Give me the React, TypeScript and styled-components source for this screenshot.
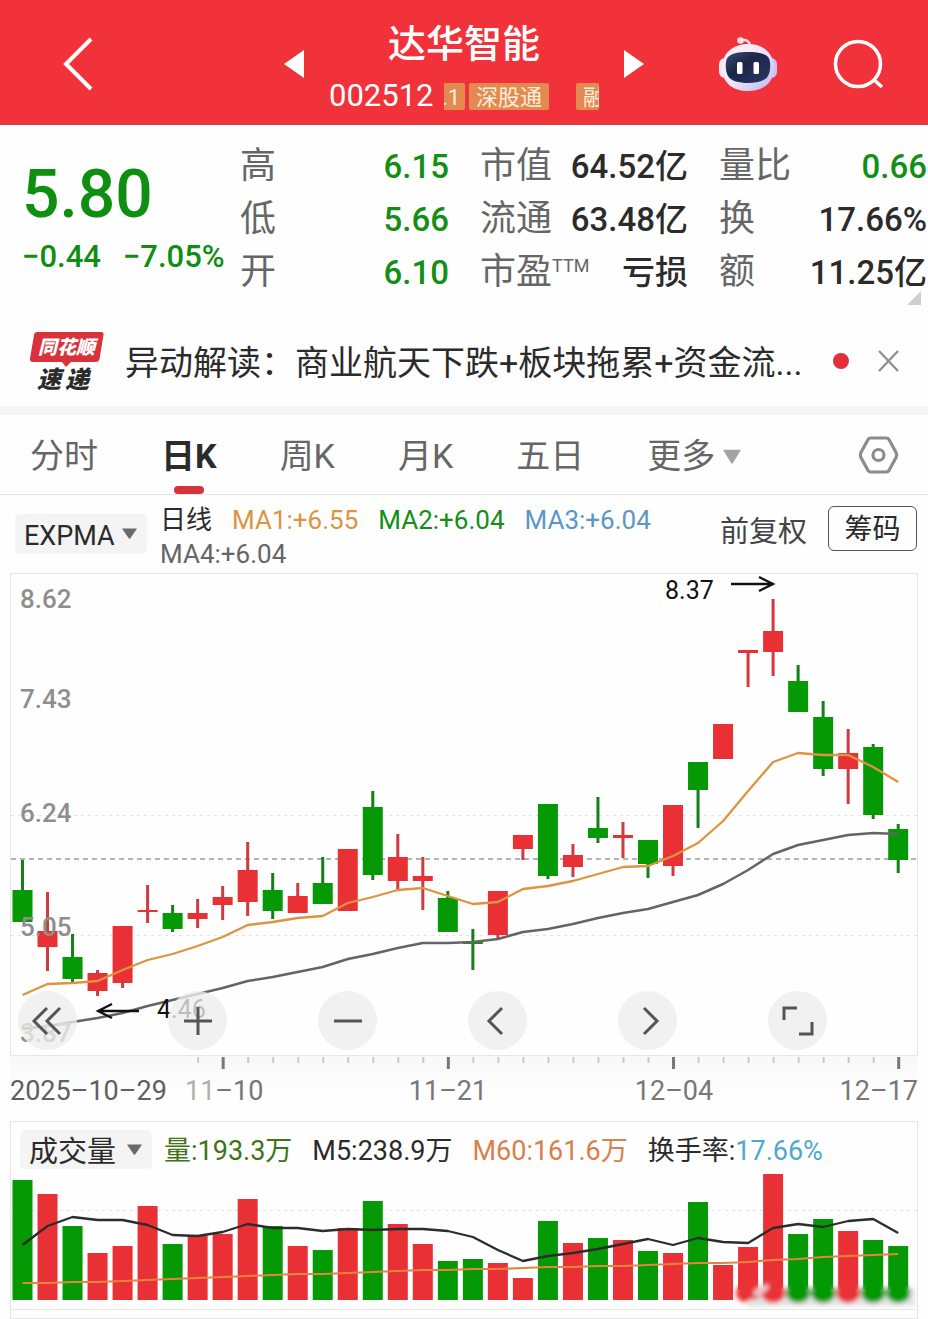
import React from "react";
import styled, { createGlobalStyle } from "styled-components";

const RED = "#e93135";
const GREEN = "#059905";

const GlobalStyle = createGlobalStyle`
  *, *::before, *::after { box-sizing: border-box; }
  body {
    margin: 0;
    background: #fefefe;
    color: #2b2b2b;
    font-family: Roboto, "Noto Sans CJK SC", sans-serif;
  }
  button, select { font: inherit; color: inherit; margin: 0; padding: 0; border: 0; background: none; }
  h1, p, dl, dt, dd { margin: 0; font-weight: inherit; }
  svg { display: block; }
`;

/* ---------- header ---------- */

const Header = styled.header`
  display: grid;
  grid-template-columns: 1fr auto 1fr;
  align-items: center;
  height: 125px;
  padding: 4px 42px 0 60px;
  background: #f2323a;
  border-bottom: 1px solid #c8434b;
  color: #fff;
`;

const IconButton = styled.button`
  display: block;
  flex: none;
`;

const StockSwitcher = styled.div`
  display: flex;
  align-items: center;
  gap: 25px;
  margin-right: 18px;
`;

const StockInfo = styled.div`
  width: 270px;
  padding-top: 10px;
`;

const StockName = styled.h1`
  font-size: 38px;
  line-height: 54px;
  text-align: center;
  font-weight: 500;
`;

const CodeLine = styled.div`
  display: flex;
  align-items: center;
  height: 50px;
  overflow: hidden;
  font-size: 31px;
  line-height: 50px;
`;

const TagTrack = styled.div`
  display: flex;
  flex: 1;
  align-items: center;
  justify-content: flex-end;
  height: 50px;
  overflow: hidden;
  margin-left: 10px;
`;

const Tag = styled.span<{ $width: number; $gap?: number; $start?: boolean }>`
  flex: none;
  width: ${(p) => p.$width}px;
  height: 27px;
  margin-left: ${(p) => p.$gap ?? 0}px;
  padding-left: ${(p) => (p.$start ? 0 : 7)}px;
  border-radius: 2px;
  background: #e28a4f;
  color: #ffeedd;
  font-size: 22px;
  line-height: 29px;
  white-space: nowrap;
`;

const HeaderTools = styled.div`
  display: flex;
  align-items: center;
  justify-content: flex-end;
  gap: 54px;
`;

/* ---------- quote ---------- */

const Quote = styled.section`
  position: relative;
  display: grid;
  grid-template-columns: 218fr 240fr 239fr 209fr;
  padding: 15px 0 16px 22px;
`;

const PriceBlock = styled.div`
  color: #0f8f12;
  font-weight: 500;
  white-space: nowrap;
`;

const Price = styled.p`
  margin-top: 13px;
  font-size: 66px;
  line-height: 84px;
`;

const Change = styled.p`
  display: flex;
  gap: 22px;
  font-size: 31px;
  line-height: 40px;
`;

const Stats = styled.dl<{ $last?: boolean }>`
  padding-right: ${(p) => (p.$last ? 1 : 31)}px;
`;

const Stat = styled.div`
  display: flex;
  justify-content: space-between;
  height: 53px;
  line-height: 53px;
  white-space: nowrap;
`;

const StatLabel = styled.dt`
  color: #666;
  font-size: 36px;
  sup {
    font-size: 18px;
    line-height: 18px;
    vertical-align: 12px;
  }
`;

const StatValue = styled.dd<{ $down?: boolean }>`
  color: ${(p) => (p.$down ? "#138f16" : "#2b2b2b")};
  font-size: 33px;
  font-weight: 500;
`;

const Corner = styled.svg`
  position: absolute;
  right: 7px;
  bottom: 10px;
`;

/* ---------- notice ---------- */

const Notice = styled.section`
  display: flex;
  align-items: center;
  height: 91px;
  padding: 0 28px 0 28px;
`;

const NoticeText = styled.a`
  flex: 1;
  margin-left: 19px;
  padding-top: 4px;
  overflow: hidden;
  color: #2b2b2b;
  font-size: 34px;
  line-height: 50px;
  text-decoration: none;
  white-space: nowrap;
`;

const UnreadDot = styled.span`
  width: 16px;
  height: 16px;
  margin: 0 28px 0 16px;
  border-radius: 50%;
  background: #e0303a;
`;

/* ---------- tabs ---------- */

const Tabs = styled.nav`
  display: flex;
  align-items: center;
  gap: 63px;
  height: 89px;
  padding: 0 29px 0 30px;
  border-top: 9px solid #f5f5f5;
  border-bottom: 1px solid #e4e4e4;
`;

const Tab = styled.button<{ $active?: boolean }>`
  position: relative;
  display: flex;
  align-items: center;
  gap: 8px;
  height: 79px;
  padding-top: 4px;
  color: ${(p) => (p.$active ? "#2b2b2b" : "#666")};
  font-size: 34px;
  font-weight: ${(p) => (p.$active ? 700 : 400)};
  line-height: 75px;
  white-space: nowrap;
  &::after {
    content: "";
    display: ${(p) => (p.$active ? "block" : "none")};
    position: absolute;
    left: 50%;
    bottom: 0;
    width: 30px;
    height: 8px;
    margin-left: -15px;
    border-radius: 4px;
    background: #d5333b;
  }
`;

const TabsEnd = styled.div`
  flex: 1;
  display: flex;
  justify-content: flex-end;
`;

/* ---------- indicator bar ---------- */

const IndicatorBar = styled.section`
  display: flex;
  align-items: center;
  min-height: 78px;
  padding: 0 11px 0 15px;
`;

const Picker = styled.label<{ $height: number }>`
  position: relative;
  flex: none;
  width: 132px;
  height: ${(p) => p.$height}px;
  border-radius: 5px;
  background: #f4f4f4;
  select {
    width: 100%;
    height: 100%;
    padding: 3px 0 0 9px;
    appearance: none;
    font-size: ${(p) => (p.$height > 39 ? 27 : 29)}px;
  }
  svg {
    position: absolute;
    right: 10px;
    top: 14px;
    pointer-events: none;
  }
`;

const MaList = styled.div`
  display: flex;
  flex: 1;
  flex-wrap: wrap;
  column-gap: 20px;
  margin-left: 13px;
  padding-top: 6px;
  font-size: 26px;
  line-height: 34px;
  white-space: nowrap;
`;

const Figure = styled.span<{ $color: string }>`
  color: ${(p) => p.$color};
`;

const Adjust = styled.button`
  margin: 0 21px 4px 0;
  color: #444;
  font-size: 29px;
  line-height: 45px;
`;

const ChipButton = styled.button`
  width: 89px;
  height: 45px;
  margin-bottom: 12px;
  padding-top: 3px;
  border: 1px solid #555;
  border-radius: 6px;
  font-size: 28px;
  line-height: 40px;
`;

/* ---------- charts ---------- */

const Panel = styled.section`
  position: relative;
  margin: 0 10px;
  border: 1px solid #e6e6e6;
`;

const Chart = styled.svg`
  width: 100%;
  height: auto;
`;

const ChartTools = styled.div`
  position: absolute;
  right: 90px;
  bottom: 5px;
  left: 7px;
  display: flex;
  justify-content: space-between;
`;

const RoundButton = styled.button`
  display: grid;
  place-items: center;
  width: 59px;
  height: 59px;
  border-radius: 50%;
  background: rgba(237, 237, 237, 0.78);
`;

const Axis = styled.div`
  margin: 0 10px;
  background: linear-gradient(#f8f8f8, #fefefe 60%);
`;

const VolumeHeader = styled.div`
  display: flex;
  align-items: center;
  gap: 20px;
  height: 47px;
  padding: 8px 0 0 9px;
  font-size: 27px;
  line-height: 39px;
  white-space: nowrap;
  & > span { padding-top: 4px; }
`;

const VolumePicker = styled(Picker)`
  margin-right: -8px;
`;

/* ---------- data ---------- */

type Candle = [high: number, top: number, bottom: number, low: number, up: 0 | 1];

const candles: Candle[] = [
  [860, 890, 922, 922, 0], [892, 931, 947, 971, 1], [934, 957, 979, 982, 0],
  [970, 973, 991, 996, 1], [926, 926, 983, 988, 1], [885, 910, 912, 923, 1],
  [905, 913, 929, 932, 0], [899, 913, 919, 928, 1], [886, 897, 905, 920, 1],
  [842, 870, 902, 916, 1], [873, 890, 911, 919, 0], [883, 896, 913, 913, 1],
  [857, 883, 904, 904, 0], [849, 849, 911, 911, 1], [791, 807, 875, 880, 0],
  [834, 857, 881, 890, 1], [857, 876, 881, 910, 1], [891, 898, 932, 932, 0],
  [929, 942, 943, 970, 0], [891, 891, 935, 938, 1], [835, 835, 849, 860, 1],
  [804, 804, 876, 879, 0], [844, 855, 867, 877, 1], [797, 828, 838, 843, 0],
  [822, 835, 838, 858, 1], [840, 840, 864, 878, 0], [805, 805, 866, 876, 1],
  [762, 762, 790, 828, 0], [724, 724, 759, 759, 1], [650, 650, 653, 687, 1],
  [599, 631, 652, 676, 1], [665, 681, 712, 712, 0], [701, 717, 769, 776, 0],
  [729, 753, 769, 804, 1], [744, 747, 815, 819, 0], [824, 829, 860, 873, 0],
];

const fastLine = [
  995, 984, 983, 981, 970, 960, 954, 946, 937, 925, 922, 918, 916, 903, 897, 890, 888, 896,
  904, 902, 889, 886, 881, 874, 867, 866, 856, 843, 821, 791, 762, 753, 755, 755, 767, 782,
];

const slowLine = [
  1029, 1026, 1022, 1018, 1013, 1006, 1000, 994, 988, 981, 977, 972, 967, 959, 954, 948, 943, 943,
  942, 939, 932, 929, 924, 918, 913, 909, 902, 895, 884, 870, 854, 845, 840, 835, 833, 834,
];

const volumeTops = [
  1180, 1194, 1226, 1253, 1246, 1206, 1244, 1236, 1234, 1199, 1226, 1246, 1250, 1228, 1201, 1224,
  1244, 1261, 1259, 1263, 1278, 1221, 1243, 1238, 1240, 1251, 1253, 1202, 1265, 1247, 1174, 1234,
  1219, 1231, 1240, 1246,
];

const volumeM5 = [
  1245, 1226, 1217, 1220, 1220, 1225, 1235, 1236, 1232, 1224, 1228, 1228, 1231, 1229, 1230, 1229,
  1229, 1231, 1237, 1250, 1261, 1256, 1253, 1249, 1244, 1239, 1245, 1238, 1242, 1243, 1228, 1224,
  1227, 1221, 1219, 1233,
];

const volumeM60 = [
  1283, 1283, 1282, 1282, 1281, 1280, 1279, 1278, 1277, 1276, 1275, 1274, 1274, 1273, 1272, 1271,
  1270, 1270, 1269, 1269, 1268, 1267, 1267, 1266, 1266, 1265, 1264, 1263, 1263, 1262, 1260, 1259,
  1257, 1256, 1255, 1254,
];

const xAt = (i: number) => 22.5 + i * 25.02;
const toPoints = (ys: number[]) => ys.map((y, i) => `${xAt(i).toFixed(1)},${y}`).join(" ");

const priceLabels = [
  { text: "8.62", y: 608 },
  { text: "7.43", y: 708 },
  { text: "6.24", y: 822 },
  { text: "5.05", y: 936 },
  { text: "3.87", y: 1042 },
];

/* ---------- drawings ---------- */

const Caret = ({ color = "#6b6b6b", width = 15, height = 11 }) => (
  <svg width={width} height={height} viewBox="0 0 15 11" preserveAspectRatio="none" aria-hidden="true">
    <path d="M0 0.5h15L8.3 10.2q-.8 1-1.6 0z" fill={color} />
  </svg>
);

const Robot = () => (
  <svg width="60" height="56" viewBox="0 0 60 56" aria-hidden="true">
    <defs>
      <linearGradient id="shell" x1="0" y1="0" x2="1" y2="1">
        <stop offset="0" stopColor="#fff4f6" />
        <stop offset="0.55" stopColor="#e9e4fa" />
        <stop offset="1" stopColor="#b9b4f3" />
      </linearGradient>
      <linearGradient id="visor" x1="0" y1="0" x2="1" y2="1">
        <stop offset="0" stopColor="#3c4a72" />
        <stop offset="0.4" stopColor="#1b2648" />
        <stop offset="1" stopColor="#2a3764" />
      </linearGradient>
    </defs>
    <path d="M23 4.500q8-2 9 5" fill="none" stroke="#ffe3e6" strokeWidth="2.500" />
    <circle cx="22.500" cy="4.500" r="3.300" fill="#ffdfe3" />
    <rect x="1" y="22" width="12" height="20" rx="6" fill="#f7e6f2" />
    <rect x="47" y="22" width="12" height="20" rx="6" fill="#c9c3f6" />
    <path d="M30 8c15 0 26 9 26 24S45 55 30 55 4 47 4 32 15 8 30 8z" fill="url(#shell)" />
    <path d="M30 16c9 0 16 1 20 5 3 3 3 14 0 19-3 5-11 7-20 7s-17-2-20-7c-3-5-3-16 0-19 4-4 11-5 20-5z" fill="url(#visor)" />
    <rect x="19" y="26" width="5.500" height="12" rx="1.500" fill="#fff" />
    <rect x="35.500" y="26" width="5.500" height="12" rx="1.500" fill="#fff" />
  </svg>
);

const BrandLogo = () => (
  <svg width="78" height="64" viewBox="0 0 78 64" role="img" aria-label="同花顺速递">
    <path
      d="M9 3h64q3 0 2.500 3l-4 24q-.5 3-4 3H43l-5 5-4-5H5q-3.500 0-3-3.500l4-23.500Q6.500 3 9 3z"
      fill="#d8333b"
    />
    <text x="10" y="25" fontSize="19" fontWeight="900" fontStyle="italic" fill="#fff">同花顺</text>
    <text x="9" y="59" fontSize="24" fontWeight="900" fontStyle="italic" fill="#2b2b2b">速</text>
    <text x="37" y="59" fontSize="24" fontWeight="900" fontStyle="italic" fill="#2b2b2b">递</text>
  </svg>
);

const ToolIcon = ({ d }: { d: string }) => (
  <svg width="34" height="34" viewBox="0 0 34 34" fill="none" stroke="#555" strokeWidth="3" aria-hidden="true">
    <path d={d} />
  </svg>
);

const chartTools = [
  { label: "最早", d: "M16 4L3 17l13 13M29 4L16 17l13 13" },
  { label: "放大", d: "M3 17h28M17 3v28" },
  { label: "缩小", d: "M3 17h28" },
  { label: "向左", d: "M21 4L8 17l13 13" },
  { label: "向右", d: "M13 4l13 13-13 13" },
  { label: "全屏", d: "M3 16V4h13M31 18v12H18" },
];

const PriceChart = () => (
  <Chart viewBox="11 574 906 481" role="img" aria-label="日K线图">
    <g stroke="#e3e3e3" strokeDasharray="3 4">
      <path d="M11 815.500H917M11 935.500H917" />
    </g>
    <path d="M11 859H917" stroke="#9a9a9a" strokeWidth="1.500" strokeDasharray="5 4" />
    {candles.map(([high, top, bottom, low, up], i) => (
      <g key={i} fill={up ? RED : GREEN}>
        <rect x={xAt(i) - 1.5} y={high} width="3" height={low - high} fill={up ? "#cf3b41" : "#15801a"} />
        <rect x={xAt(i) - 10} y={top} width="20" height={Math.max(bottom - top, 2)} />
      </g>
    ))}
    <g fill="none" strokeLinejoin="round">
      <polyline points={toPoints(fastLine)} stroke="#dd9440" strokeWidth="2.300" />
      <polyline points={toPoints(slowLine)} stroke="#646464" strokeWidth="2.500" />
    </g>
    <g fontSize="26" fontWeight="500" fill="#8e8e8e">
      {priceLabels.map((l) => (
        <text key={l.text} x="20" y={l.y}>{l.text}</text>
      ))}
    </g>
    <g fontSize="25" fill="#111">
      <text x="665" y="599">8.37</text>
      <text x="157" y="1018">4.46</text>
    </g>
    <g fill="none" stroke="#111" strokeWidth="2.300">
      <path d="M731 584h42M759 577l14 7-14 7" />
      <path d="M139 1011H98M112 1004l-14 7 14 7" />
    </g>
  </Chart>
);

const DateAxis = () => (
  <Chart viewBox="10 1056 908 65" role="img" aria-label="日期">
    {candles.map((_, i) => {
      if (i < 7) return null;
      const major = i % 9 === 8;
      return (
        <rect
          key={i}
          x={xAt(i) - (major ? 1 : 0.5)}
          y="1057"
          width={major ? 3 : 2}
          height={major ? 12 : 6}
          fill={major ? "#777" : "#c9c9c9"}
        />
      );
    })}
    <g fontSize="27" fill="#777">
      <text x="10" y="1100" fill="#5f5f5f">2025–10–29</text>
      <text x="185" y="1100"><tspan fill="#b0b0b0">11</tspan>–10</text>
      <text x="448" y="1100" textAnchor="middle">11–21</text>
      <text x="674" y="1100" textAnchor="middle">12–04</text>
      <text x="918" y="1100" textAnchor="end">12–17</text>
    </g>
  </Chart>
);

const VolumeChart = () => (
  <Chart viewBox="11 1169 906 140" role="img" aria-label="成交量图">
    <defs>
      <filter id="smudge" x="-20%" y="-50%" width="140%" height="200%">
        <feGaussianBlur stdDeviation="2" />
      </filter>
    </defs>
    <path d="M11 1210.500H917" stroke="#e3e3e3" strokeDasharray="3 4" />
    {volumeTops.map((y, i) => (
      <rect
        key={i}
        x={xAt(i) - 10}
        y={y}
        width="20"
        height={(i > 28 ? 1290 : 1300) - y}
        fill={candles[i][4] ? RED : GREEN}
      />
    ))}
    <g filter="url(#smudge)">
      <path d="M746 1303L770 1288H915V1306H752z" fill="#e4e4e4" />
      {volumeTops.map((_, i) =>
        i > 28 ? (
          <ellipse key={i} cx={xAt(i)} cy="1293" rx="12" ry="10" fill={candles[i][4] ? RED : GREEN} />
        ) : null,
      )}
      <ellipse cx="761" cy="1290" rx="9" ry="4" fill="#e9c5c8" transform="rotate(-35 761 1290)" />
      <ellipse cx="755" cy="1303" rx="9" ry="4" fill="#e2e2e2" />
    </g>
    <g fill="none" strokeLinejoin="round">
      <polyline points={toPoints(volumeM5)} stroke="#2c2c2c" strokeWidth="2.300" />
      <polyline points={toPoints(volumeM60)} stroke="#e58440" strokeWidth="2.200" />
    </g>
  </Chart>
);

const BottomStrip = styled.div`
  height: 9px;
  border-top: 1px solid #e6e6e6;
`;

/* ---------- page ---------- */

interface StatItem {
  label: React.ReactNode;
  value: string;
  down?: boolean;
}

const statColumns: StatItem[][] = [
  [
    { label: "高", value: "6.15", down: true },
    { label: "低", value: "5.66", down: true },
    { label: "开", value: "6.10", down: true },
  ],
  [
    { label: "市值", value: "64.52亿" },
    { label: "流通", value: "63.48亿" },
    { label: <>市盈<sup>TTM</sup></>, value: "亏损" },
  ],
  [
    { label: "量比", value: "0.66", down: true },
    { label: "换", value: "17.66%" },
    { label: "额", value: "11.25亿" },
  ],
];

export default function App() {
  return (
    <>
      <GlobalStyle />
      <Header>
        <IconButton aria-label="返回">
          <svg width="34" height="54" viewBox="0 0 34 54" fill="none" stroke="#fff" strokeWidth="4">
            <path d="M31 2L6 27l25 25" />
          </svg>
        </IconButton>
        <StockSwitcher>
          <IconButton aria-label="上一只">
            <svg width="20" height="28" viewBox="0 0 20 28"><path d="M0 14L20 0v28z" fill="#fff" /></svg>
          </IconButton>
          <StockInfo>
            <StockName>达华智能</StockName>
            <CodeLine>
              002512
              <TagTrack>
                <Tag $width={23} $start>.1</Tag>
                <Tag $width={80} $gap={4}>深股通</Tag>
                <Tag $width={23} $gap={27}>融</Tag>
              </TagTrack>
            </CodeLine>
          </StockInfo>
          <IconButton aria-label="下一只">
            <svg width="20" height="28" viewBox="0 0 20 28"><path d="M20 14L0 0v28z" fill="#fff" /></svg>
          </IconButton>
        </StockSwitcher>
        <HeaderTools>
          <IconButton aria-label="智能助手"><Robot /></IconButton>
          <IconButton aria-label="搜索">
            <svg width="54" height="52" viewBox="0 0 54 52" fill="none" stroke="#fff" strokeWidth="3.500">
              <circle cx="26" cy="26" r="22.500" />
              <path d="M41 41l9 8" />
            </svg>
          </IconButton>
        </HeaderTools>
      </Header>

      <Quote>
        <PriceBlock>
          <Price>5.80</Price>
          <Change><span>−0.44</span><span>−7.05%</span></Change>
        </PriceBlock>
        {statColumns.map((column, c) => (
          <Stats key={c} $last={c === 2}>
            {column.map((s) => (
              <Stat key={s.value}>
                <StatLabel>{s.label}</StatLabel>
                <StatValue $down={s.down}>{s.value}</StatValue>
              </Stat>
            ))}
          </Stats>
        ))}
        <Corner width="14" height="14" viewBox="0 0 14 14" aria-hidden="true">
          <path d="M14 0v14H0z" fill="#cfcfcf" />
        </Corner>
      </Quote>

      <Notice>
        <BrandLogo />
        <NoticeText href="#news">{"异动解读\uFF1A商业航天下跌+板块拖累+资金流..."}</NoticeText>
        <UnreadDot />
        <IconButton aria-label="关闭">
          <svg width="23" height="22" viewBox="0 0 23 22" stroke="#8f8f8f" strokeWidth="2.300">
            <path d="M2 1l19 20M21 1L2 21" />
          </svg>
        </IconButton>
      </Notice>

      <Tabs>
        <Tab>分时</Tab>
        <Tab $active aria-current="page">日K</Tab>
        <Tab>周K</Tab>
        <Tab>月K</Tab>
        <Tab>五日</Tab>
        <Tab>更多<Caret color="#a3a3a3" width={18} height={15} /></Tab>
        <TabsEnd>
          <IconButton aria-label="设置">
            <svg width="41" height="40" viewBox="0 0 41 40" fill="none" stroke="#8c8c8c" strokeWidth="3.200">
              <path d="M12.500 3h16q1.500 0 2.300 1.300l7.400 13.500q1 2.200 0 4.400l-7.400 13.500q-.8 1.300-2.300 1.300h-16q-1.500 0-2.300-1.300L2.800 22.200q-1-2.200 0-4.400l7.400-13.500Q11 3 12.500 3z" />
              <circle cx="20.500" cy="20" r="5.500" />
            </svg>
          </IconButton>
        </TabsEnd>
      </Tabs>

      <IndicatorBar>
        <Picker $height={40}>
          <select aria-label="主图指标" defaultValue="EXPMA"><option>EXPMA</option></select>
          <Caret />
        </Picker>
        <MaList>
          <Figure $color="#2b2b2b">日线</Figure>
          <Figure $color="#dd9440">MA1:+6.55</Figure>
          <Figure $color="#138f16">MA2:+6.04</Figure>
          <Figure $color="#5b96c8">MA3:+6.04</Figure>
          <Figure $color="#666">MA4:+6.04</Figure>
        </MaList>
        <Adjust>前复权</Adjust>
        <ChipButton>筹码</ChipButton>
      </IndicatorBar>

      <Panel>
        <PriceChart />
        <ChartTools>
          {chartTools.map((t) => (
            <RoundButton key={t.label} aria-label={t.label}><ToolIcon d={t.d} /></RoundButton>
          ))}
        </ChartTools>
      </Panel>
      <Axis><DateAxis /></Axis>

      <Panel>
        <VolumeHeader>
          <VolumePicker $height={39}>
            <select aria-label="副图指标" defaultValue="成交量"><option>成交量</option></select>
            <Caret />
          </VolumePicker>
          <Figure $color="#3d7418">量:193.3万</Figure>
          <Figure $color="#2b2b2b">M5:238.9万</Figure>
          <Figure $color="#d97f4c">M60:161.6万</Figure>
          <span>换手率:<Figure $color="#4fa8cf">17.66%</Figure></span>
        </VolumeHeader>
        <VolumeChart />
        <BottomStrip />
      </Panel>
    </>
  );
}
